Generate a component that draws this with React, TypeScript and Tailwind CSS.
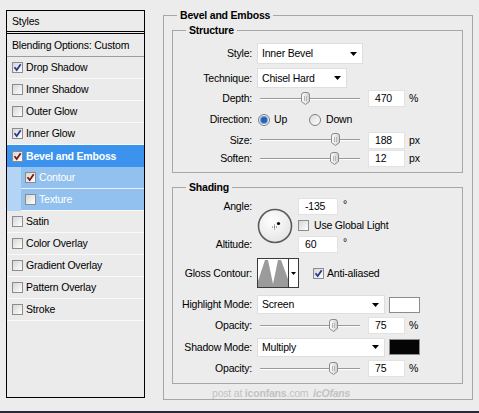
import type { ReactNode } from "react"

const line = "border border-[#a7a7a7]"

function Box({ on, mark = "#283a8e" }: { on?: boolean; mark?: string }) {
  return (
    <span className="flex h-[11px] w-[11px] shrink-0 items-center justify-center border border-[#8c8c8c] bg-linear-to-br from-[#d6d6d6] to-white">
      {on && (
        <svg width="9" height="9" viewBox="0 0 9 9">
          <path d="M1.5 4.3l2.2 2.7 4-5.8" fill="none" stroke={mark} strokeWidth="1.8" />
        </svg>
      )}
    </span>
  )
}

function Radio({ on }: { on?: boolean }) {
  return (
    <span className="flex h-[12px] w-[12px] shrink-0 items-center justify-center rounded-full border border-[#7f7f7f] bg-linear-to-br from-[#dcdcdc] to-white">
      {on && <span className="h-[6px] w-[6px] rounded-full bg-[#2463b4] shadow-[0_0_0_1px_#6fa2de]" />}
    </span>
  )
}

function Arrow() {
  return (
    <svg width="7" height="4" viewBox="0 0 7 4">
      <path d="M0 0h7L3.5 4z" fill="#000" />
    </svg>
  )
}

function Select({ value, className }: { value: string; className: string }) {
  return (
    <div className={`flex items-center justify-between border border-[#dedede] bg-white pl-[4px] pr-[5px] ${className}`}>
      <span>{value}</span>
      <Arrow />
    </div>
  )
}

function Thumb({ className }: { className: string }) {
  return (
    <svg width="9" height="13" viewBox="0 0 9 13" className={className}>
      <defs>
        <linearGradient id="tg" x1="0" x2="1">
          <stop offset="0" stopColor="#ffffff" />
          <stop offset="1" stopColor="#cfcfcf" />
        </linearGradient>
      </defs>
      <path d="M0.5 3Q0.5 0.5 3 0.5H6Q8.5 0.5 8.5 3V9.5L4.5 12.5L0.5 9.5Z" fill="url(#tg)" stroke="#8a8a8a" />
      <path d="M3.5 4v5M5.5 4v5" stroke="#b5b5b5" />
    </svg>
  )
}

function Slider({ thumb }: { thumb: string }) {
  return (
    <div className="relative flex h-[14px] w-[106px] shrink-0 items-center px-[3px]">
      <div className="h-[2px] w-full border-t border-b border-t-[#9a9a9a] border-b-white" />
      <Thumb className={`absolute top-0 ${thumb}`} />
    </div>
  )
}

function Field({ v, className = "w-[37px]" }: { v: string; className?: string }) {
  return (
    <div className={`flex h-[17px] shrink-0 items-center border border-[#e2e2e2] bg-white pl-[6px] ${className}`}>{v}</div>
  )
}

function Row({ label, className, children }: { label: string; className: string; children: ReactNode }) {
  return (
    <div className={`flex items-center ${className}`}>
      <span className="w-[79px] shrink-0 text-right">{label}</span>
      <div className="ml-[5px] flex h-full items-center">{children}</div>
    </div>
  )
}

function SliderRow({ label, className, thumb, v, unit }: { label: string; className: string; thumb: string; v: string; unit: string }) {
  return (
    <Row label={label} className={className}>
      <Slider thumb={thumb} />
      <div className="ml-[5px]">
        <Field v={v} />
      </div>
      <span className="ml-[4px]">{unit}</span>
    </Row>
  )
}

function Dial() {
  return (
    <svg width="36" height="36" viewBox="0 0 36 36">
      <defs>
        <radialGradient id="dg" cx="0.4" cy="0.35" r="0.7">
          <stop offset="0" stopColor="#ffffff" />
          <stop offset="1" stopColor="#e4e4e4" />
        </radialGradient>
      </defs>
      <circle cx="18" cy="18" r="16.5" fill="url(#dg)" stroke="#5b5b5b" strokeWidth="1.6" />
      <path d="M15 19h5M17.5 16.5v5" stroke="#444" strokeWidth="0.8" strokeDasharray="1 1" />
      <circle cx="21.5" cy="15.5" r="1.6" fill="#000" />
    </svg>
  )
}

function Contour() {
  return (
    <div className="flex h-[30px] w-[42px] shrink-0 border border-[#3a3a3a] bg-white">
      <svg width="30" height="28" viewBox="0 0 30 28" className="shrink-0">
        <path d="M0 28V22L7 1H10L15 25L20 1H23L30 20V28Z" fill="#9b9b9b" />
      </svg>
      <div className="flex flex-1 items-center justify-center border-l border-[#3a3a3a]">
        <svg width="5" height="3" viewBox="0 0 5 3">
          <path d="M0 0h5L2.5 3z" fill="#000" />
        </svg>
      </div>
    </div>
  )
}

const topEffects = [
  { name: "Drop Shadow", on: true },
  { name: "Inner Shadow", on: false },
  { name: "Outer Glow", on: false },
  { name: "Inner Glow", on: true },
]

const lowEffects = ["Satin", "Color Overlay", "Gradient Overlay", "Pattern Overlay", "Stroke"]

function StylesList() {
  return (
    <div className="ml-[6px] mt-[10px] h-[388px] w-[139px] shrink-0 border border-black bg-[#ebebeb]">
      <div className="flex h-[23px] items-center border-b-[3px] border-double border-black pl-[5px]">Styles</div>
      <div className="flex h-[23px] items-center border-b border-[#9d9d9d] pl-[5px]">Blending Options: Custom</div>
      {topEffects.map((e) => (
        <div key={e.name} className="flex h-[22px] items-center gap-[3px] border-b border-[#f9f9f9] pl-[5px]">
          <Box on={e.on} />
          {e.name}
        </div>
      ))}
      <div className="flex h-[22px] items-center gap-[3px] bg-[#3c93ee] pl-[5px] font-bold text-white">
        <Box on mark="#7c1616" />
        Bevel and Emboss
      </div>
      <div className="bg-[#b3d4f5] pl-[14px]">
        <div className="flex h-[22px] items-center gap-[3px] border-b border-[#e6f0fb] bg-[#93c1ef] pl-[4px] text-white">
          <Box on mark="#7c1616" />
          Contour
        </div>
        <div className="flex h-[22px] items-center gap-[3px] border-b border-[#f9f9f9] bg-[#93c1ef] pl-[4px] text-white">
          <Box />
          Texture
        </div>
      </div>
      {lowEffects.map((n) => (
        <div key={n} className="flex h-[22px] items-center gap-[3px] border-b border-[#f9f9f9] pl-[5px]">
          <Box />
          {n}
        </div>
      ))}
    </div>
  )
}

export default function App() {
  return (
    <div className="flex h-[413px] w-[479px] flex-col bg-[#ececec] font-['Liberation_Sans',Arial,sans-serif] text-[10.5px] leading-[13px] tracking-[-0.2px] text-black">
      <div className="flex flex-1">
        <StylesList />

        <fieldset className={`ml-[18px] mt-[9px] w-[310px] self-start ${line}`}>
          <legend className="ml-[13px] px-[3px] font-bold">Bevel and Emboss</legend>
          <div className="pl-[8px] pr-[9px] pt-[2px]">
            <fieldset className={line}>
              <legend className="ml-[13px] px-[3px] font-bold">Structure</legend>
              <div className="pb-[5px] pt-[6px]">
                <Row label="Style:" className="h-[21px]">
                  <Select value="Inner Bevel" className="h-[21px] w-[106px]" />
                </Row>
                <Row label="Technique:" className="mt-[4px] h-[20px]">
                  <Select value="Chisel Hard" className="h-[20px] w-[90px]" />
                </Row>
                <SliderRow label="Depth:" className="h-[21px]" thumb="left-[44px]" v="470" unit="%" />
                <Row label="Direction:" className="h-[21px]">
                  <div className="ml-[1px] flex items-center gap-[4px]">
                    <Radio on />
                    Up
                  </div>
                  <div className="ml-[22px] flex items-center gap-[5px]">
                    <Radio />
                    Down
                  </div>
                </Row>
                <SliderRow label="Size:" className="h-[20px]" thumb="left-[74px]" v="188" unit="px" />
                <SliderRow label="Soften:" className="h-[17px]" thumb="left-[73px]" v="12" unit="px" />
              </div>
            </fieldset>

            <fieldset className={`mt-[8px] ${line}`}>
              <legend className="ml-[13px] px-[3px] font-bold">Shading</legend>
              <div className="pb-[4px] pt-[4px]">
                <div className="grid grid-cols-[79px_36px_auto] grid-rows-[17px_21px_17px] gap-x-[5px]">
                  <span className="self-center text-right">Angle:</span>
                  <div className="row-span-3 flex items-center justify-center">
                    <Dial />
                  </div>
                  <div className="flex items-center">
                    <Field v="-135" className="w-[40px]" />
                    <span className="ml-[5px] self-start">°</span>
                  </div>
                  <div className="col-start-3 flex items-center gap-[5px]">
                    <Box />
                    Use Global Light
                  </div>
                  <span className="self-center text-right">Altitude:</span>
                  <div className="flex items-center">
                    <Field v="60" className="w-[40px]" />
                    <span className="ml-[5px] self-start">°</span>
                  </div>
                </div>

                <Row label="Gloss Contour:" className="mt-[3px] h-[34px]">
                  <Contour />
                  <div className="ml-[14px] flex items-center gap-[3px]">
                    <Box on />
                    Anti-aliased
                  </div>
                </Row>
                <Row label="Highlight Mode:" className="mt-[4px] h-[21px]">
                  <Select value="Screen" className="h-[19px] w-[128px]" />
                  <div className="ml-[4px] h-[16px] w-[31px] border border-[#8c8c8c] bg-white" />
                </Row>
                <SliderRow label="Opacity:" className="h-[21px]" thumb="left-[72px]" v="75" unit="%" />
                <Row label="Shadow Mode:" className="h-[22px]">
                  <Select value="Multiply" className="h-[19px] w-[128px]" />
                  <div className="ml-[4px] h-[16px] w-[31px] border border-[#8c8c8c] bg-[#050505]" />
                </Row>
                <SliderRow label="Opacity:" className="h-[21px]" thumb="left-[72px]" v="75" unit="%" />
              </div>
            </fieldset>

            <div className="mt-[4px] pl-[40px] leading-[11px] text-[#c2c2c2]">
              post at <b>iconfans</b>.com <i className="ml-[2px] font-bold">icOfans</i>
            </div>
          </div>
        </fieldset>
      </div>
      <div className="h-[2px] bg-[#2b2738]" />
    </div>
  )
}
